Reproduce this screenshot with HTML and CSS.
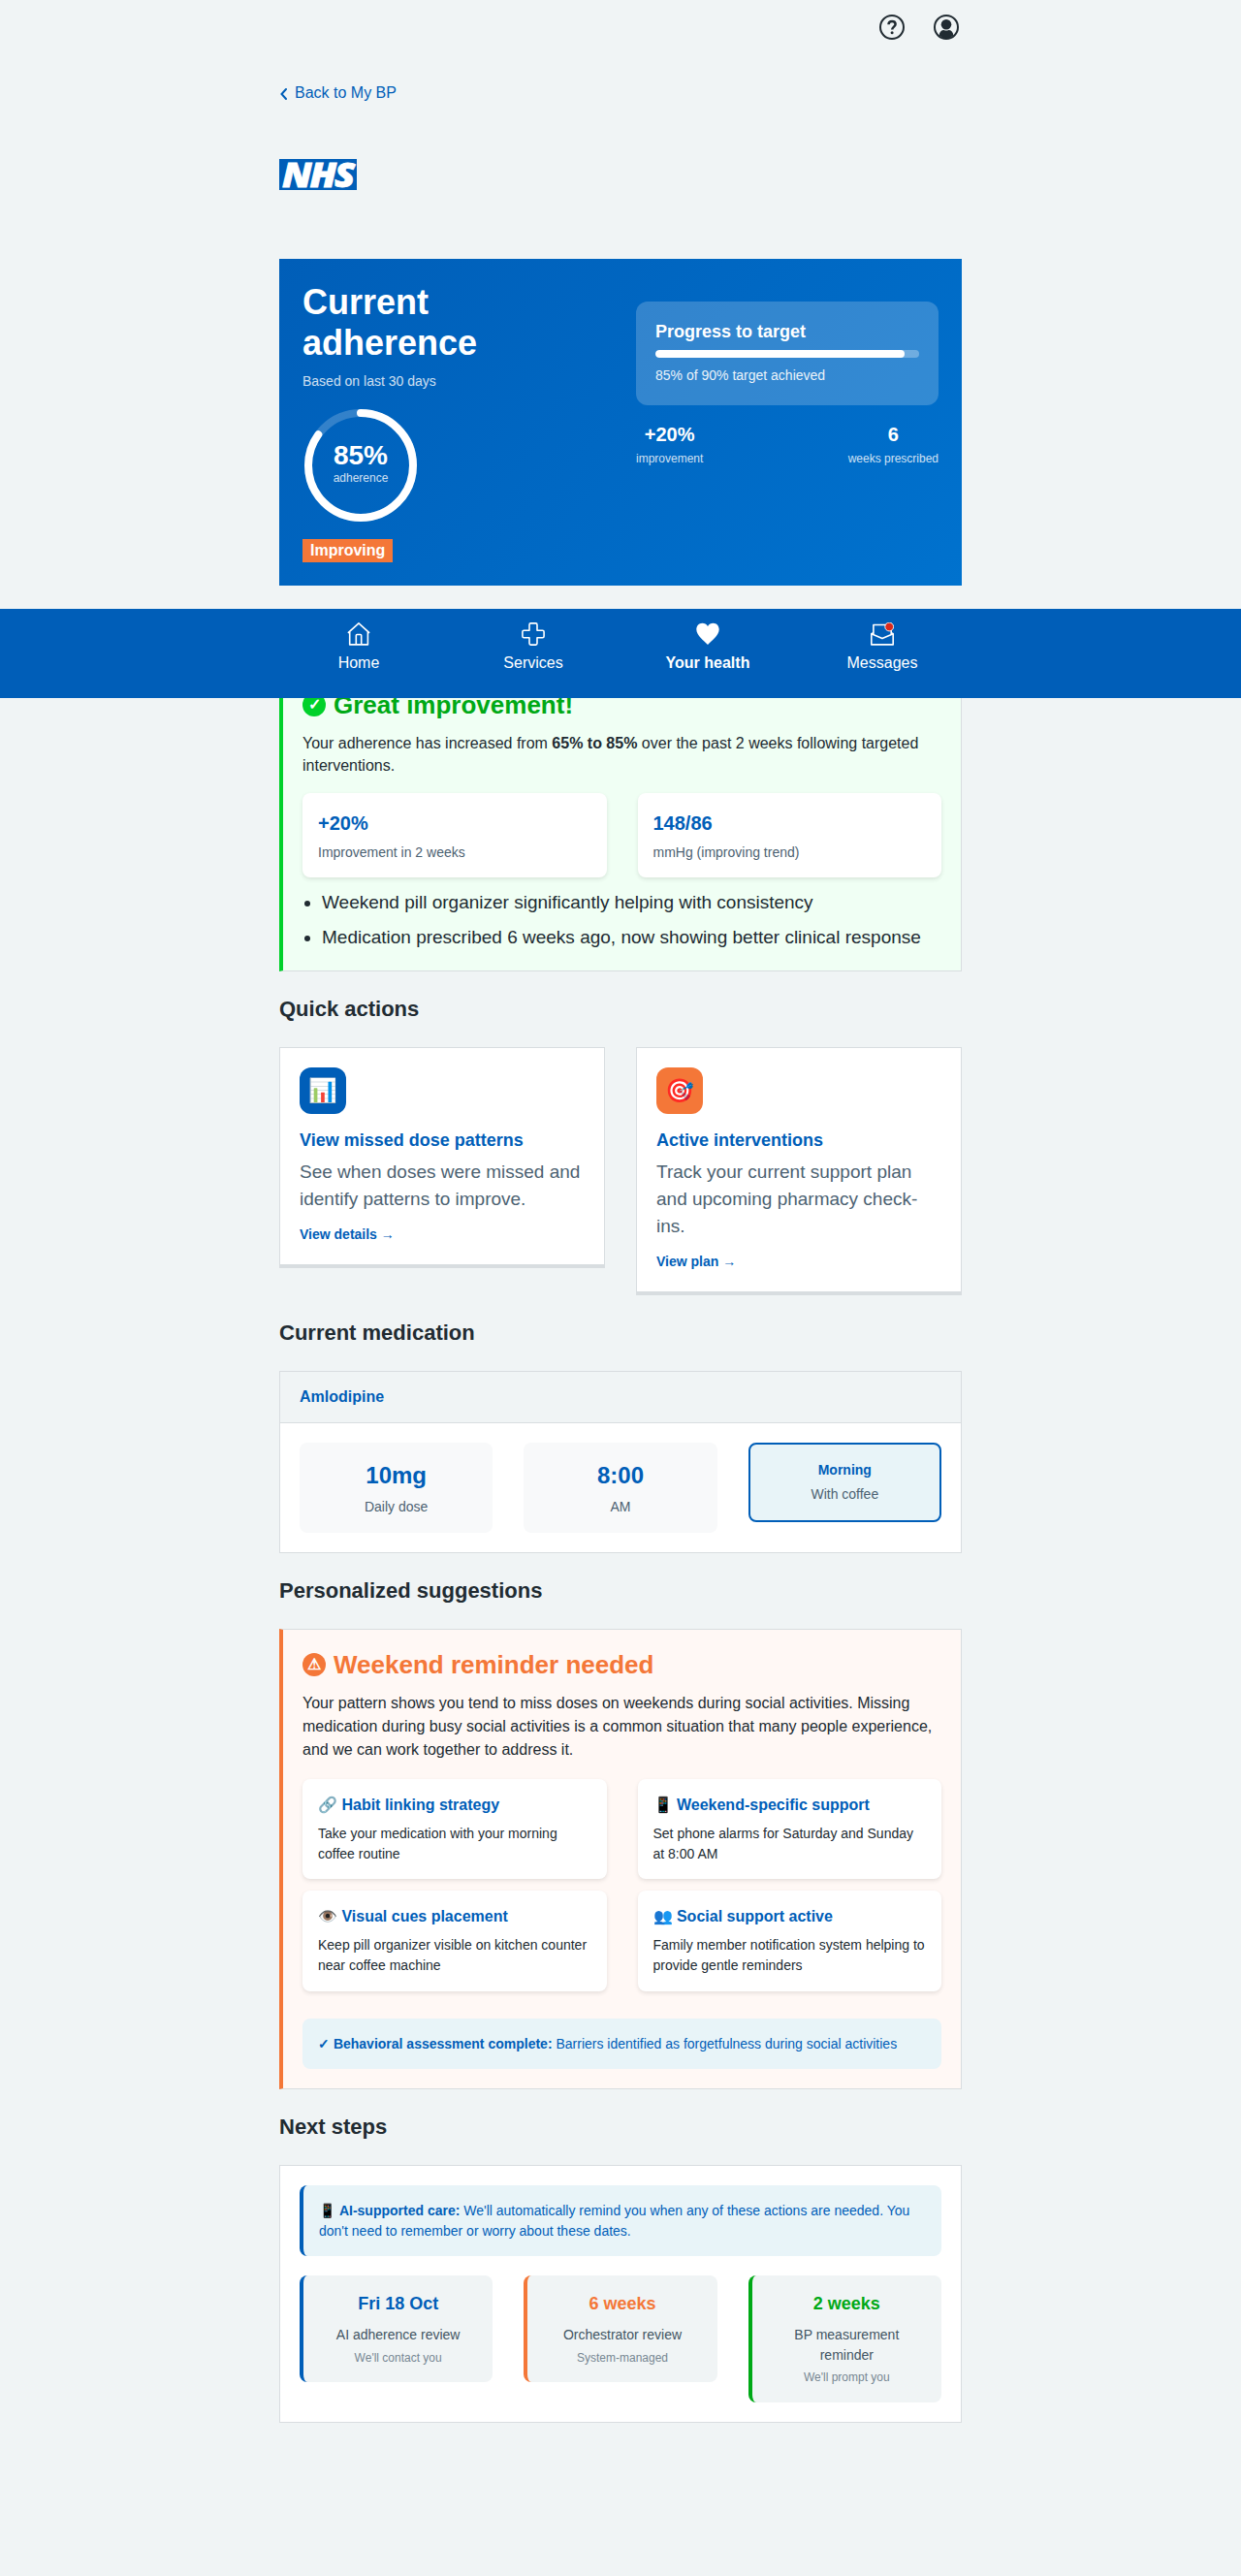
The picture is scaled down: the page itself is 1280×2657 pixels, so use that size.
FILE: index.html
```html
<!DOCTYPE html>
<html lang="en">
<head>
<meta charset="utf-8">
<title>Current adherence</title>
<link rel="stylesheet" href="styles.css">
</head>
<body>
<header class="container header">
  <div class="header-icons">
    <svg class="header-icon" viewBox="0 0 26 26" role="img" aria-label="Help">
      <circle cx="13" cy="13" r="12" fill="none" stroke="#212b32" stroke-width="2"/>
      <path d="M9.500 10.300c0-2.200 1.500-3.400 3.600-3.400s3.500 1.200 3.500 3.100c0 2.600-3.400 2.700-3.400 5.600" fill="none" stroke="#212b32" stroke-width="2.500"/>
      <circle cx="13.100" cy="18.800" r="1.500" fill="#212b32"/>
    </svg>
    <svg class="header-icon" viewBox="0 0 26 26" role="img" aria-label="Account">
      <circle cx="13" cy="13" r="12" fill="none" stroke="#212b32" stroke-width="2"/>
      <circle cx="13" cy="10.200" r="5.300" fill="#212b32"/>
      <path d="M5.600 21.600c.3-3.600 2.400-5.600 5-5.600 1.600.7 3.200.7 4.800 0 2.600 0 4.700 2 5 5.600A12 12 0 0 1 13 25a12 12 0 0 1-7.400-3.400z" fill="#212b32"/>
    </svg>
  </div>
  <a class="back-link" href="#">
    <svg class="chevron" viewBox="0 0 7 12"><path d="M6 1L1.500 6 6 11" fill="none" stroke="#005eb8" stroke-width="2" stroke-linecap="round"/></svg>
    Back to My BP
  </a>
  <svg class="logo" viewBox="0 0 80 32" role="img" aria-label="NHS">
    <rect width="80" height="32" fill="#005eb8"/>
    <text class="logo-text" x="3" y="29" textLength="73" lengthAdjust="spacingAndGlyphs">NHS</text>
  </svg>
</header>

<main class="container">
  <section class="hero">
    <div class="hero-main">
      <h1 class="hero-title">Current adherence</h1>
      <p class="hero-sub">Based on last 30 days</p>
      <div class="ring">
        <svg class="ring-svg" viewBox="0 0 120 120">
          <circle cx="60" cy="60" r="54" fill="none" stroke="#fff" stroke-opacity=".2" stroke-width="8"/>
          <circle cx="60" cy="60" r="54" fill="none" stroke="#fff" stroke-width="8" stroke-linecap="round" pathLength="100" stroke-dasharray="85 100" transform="rotate(-90 60 60)"/>
        </svg>
        <div class="ring-label"><span class="ring-value">85%</span><span class="ring-caption">adherence</span></div>
      </div>
      <strong class="tag">Improving</strong>
    </div>
    <div class="hero-side">
      <div class="target">
        <h3 class="target-title">Progress to target</h3>
        <div class="bar"><div class="bar-fill" style="width:94.4%"></div></div>
        <p class="target-note">85% of 90% target achieved</p>
      </div>
      <div class="hero-stats">
        <div class="hero-stat"><span class="hero-num">+20%</span><span class="hero-cap">improvement</span></div>
        <div class="hero-stat"><span class="hero-num">6</span><span class="hero-cap">weeks prescribed</span></div>
      </div>
    </div>
  </section>

  <section class="callout callout-green">
    <h2 class="callout-title"><span class="badge">✓</span>Great improvement!</h2>
    <p class="callout-text">Your adherence has increased from <strong>65% to 85%</strong> over the past 2 weeks following targeted interventions.</p>
    <div class="pair">
      <div class="mini"><div class="mini-num">+20%</div><div class="mini-cap">Improvement in 2 weeks</div></div>
      <div class="mini"><div class="mini-num">148/86</div><div class="mini-cap">mmHg (improving trend)</div></div>
    </div>
    <ul class="bullets">
      <li>Weekend pill organizer significantly helping with consistency</li>
      <li>Medication prescribed 6 weeks ago, now showing better clinical response</li>
    </ul>
  </section>

  <h2 class="section-title">Quick actions</h2>
  <div class="actions">
    <article class="action">
      <div class="action-icon">📊</div>
      <h3 class="action-title">View missed dose patterns</h3>
      <p class="action-text">See when doses were missed and identify patterns to improve.</p>
      <a class="action-link" href="#">View details →</a>
    </article>
    <article class="action">
      <div class="action-icon action-icon-orange">🎯</div>
      <h3 class="action-title">Active interventions</h3>
      <p class="action-text">Track your current support plan and upcoming pharmacy check-ins.</p>
      <a class="action-link" href="#">View plan →</a>
    </article>
  </div>

  <h2 class="section-title">Current medication</h2>
  <section class="panel">
    <h3 class="panel-head">Amlodipine</h3>
    <div class="panel-body trio">
      <div class="dose"><div class="dose-num">10mg</div><div class="dose-cap">Daily dose</div></div>
      <div class="dose"><div class="dose-num">8:00</div><div class="dose-cap">AM</div></div>
      <div class="dose dose-active"><div class="dose-when">Morning</div><div class="dose-cap">With coffee</div></div>
    </div>
  </section>

  <h2 class="section-title">Personalized suggestions</h2>
  <section class="callout callout-orange">
    <h2 class="callout-title"><span class="badge">⚠</span>Weekend reminder needed</h2>
    <p class="callout-text">Your pattern shows you tend to miss doses on weekends during social activities. Missing medication during busy social activities is a common situation that many people experience, and we can work together to address it.</p>
    <div class="pair">
      <div class="mini"><h4 class="mini-title">🔗 Habit linking strategy</h4><p class="mini-text">Take your medication with your morning coffee routine</p></div>
      <div class="mini"><h4 class="mini-title">📱 Weekend-specific support</h4><p class="mini-text">Set phone alarms for Saturday and Sunday at 8:00 AM</p></div>
      <div class="mini"><h4 class="mini-title">👁️ Visual cues placement</h4><p class="mini-text">Keep pill organizer visible on kitchen counter near coffee machine</p></div>
      <div class="mini"><h4 class="mini-title">👥 Social support active</h4><p class="mini-text">Family member notification system helping to provide gentle reminders</p></div>
    </div>
    <p class="note note-assessment"><strong>✓ Behavioral assessment complete:</strong> Barriers identified as forgetfulness during social activities</p>
  </section>

  <h2 class="section-title">Next steps</h2>
  <section class="panel">
    <div class="panel-body">
      <p class="note note-ai">📱 <strong>AI-supported care:</strong> We'll automatically remind you when any of these actions are needed. You don't need to remember or worry about these dates.</p>
      <div class="trio">
        <div class="step step-blue"><div class="step-date">Fri 18 Oct</div><div class="step-name">AI adherence review</div><div class="step-by">We'll contact you</div></div>
        <div class="step step-orange"><div class="step-date">6 weeks</div><div class="step-name">Orchestrator review</div><div class="step-by">System-managed</div></div>
        <div class="step step-green"><div class="step-date">2 weeks</div><div class="step-name">BP measurement reminder</div><div class="step-by">We'll prompt you</div></div>
      </div>
    </div>
  </section>
</main>

<nav class="nav">
  <div class="nav-inner">
    <a class="nav-item" href="#">
      <svg class="nav-icon" viewBox="0 0 24 24"><path d="M.9 10.800L12 .9l11.100 9.900M2.700 9.500v13.400h18.700V9.500M9.300 22.900v-9.500q0-.9.900-.9h3.600q.9 0 .9.900v9.500"/></svg>
      Home
    </a>
    <a class="nav-item" href="#">
      <svg class="nav-icon" viewBox="0 0 24 24"><path d="M9.500.9h5q1.500 0 1.500 1.500v5.900h5.600q1.500 0 1.500 1.500v4.500q0 1.500-1.500 1.500H16v5.800q0 1.500-1.500 1.500h-5Q8 23.100 8 21.600v-5.800H2.400q-1.500 0-1.500-1.500V9.800q0-1.500 1.500-1.500H8V2.400Q8 .9 9.500.9z"/></svg>
      Services
    </a>
    <a class="nav-item nav-item-active" href="#">
      <svg class="nav-icon" viewBox="0 0 24 24"><path class="solid" d="M12 23C8.500 19.200.3 13.600.3 7.300.3 3.600 3 .8 6.300.8c2.400 0 4.500 1.200 5.700 3.100C13.200 2 15.300.8 17.700.8c3.300 0 6 2.800 6 6.500C23.700 13.600 15.500 19.200 12 23z"/></svg>
      Your health
    </a>
    <a class="nav-item" href="#">
      <svg class="nav-icon" viewBox="0 0 24 24"><path d="M2.900 12V2.500h15M21.200 8v4M2.900 10.600L.8 11.800v11.100h22.400V11.800l-2-1.200M.8 11.800L12 16.600l11.200-4.800"/><circle class="dot" cx="19.200" cy="4.500" r="4.400"/></svg>
      Messages
    </a>
  </div>
</nav>
</body>
</html>
```
FILE: styles.css
```css
* { box-sizing: border-box; }

body {
  margin: 0;
  min-height: 2657px;
  position: relative;
  background: #f0f4f5;
  color: #212b32;
  font-family: "Liberation Sans", Arial, sans-serif;
  font-size: 19px;
  line-height: 1.47368;
}

h1, h2, h3, h4, p, ul { margin: 0; }
a { text-decoration: none; }

.container { width: 704px; margin: 0 auto; }

/* Header */
.header { height: 267px; padding-top: 15px; }
.header-icons {
  display: flex;
  justify-content: flex-end;
  gap: 30px;
  padding-right: 3px;
}
.header-icon { width: 26px; height: 26px; display: block; }
.back-link {
  display: flex;
  align-items: center;
  gap: 8px;
  width: max-content;
  margin-top: 43px;
  padding-left: 1px;
  color: #005eb8;
  font-size: 16px;
  line-height: 24px;
}
.chevron { width: 7px; height: 12px; margin-top: 1px; }
.logo { display: block; width: 80px; height: 32px; margin-top: 56px; }
.logo-text {
  fill: #fff;
  stroke: #fff;
  stroke-width: .8px;
  font-family: "Open Sans", "Noto Sans", sans-serif;
  font-size: 36px;
  font-weight: 800;
  font-style: italic;
  letter-spacing: -2px;
}

/* Hero */
.hero {
  display: grid;
  grid-template-columns: 312px 312px;
  gap: 32px;
  height: 337px;
  padding: 24px;
  background: linear-gradient(135deg, #005eb8 0%, #0072ce 100%);
  color: #fff;
}
.hero-title { font-size: 36px; line-height: 42px; }
.hero-sub { margin-top: 8px; font-size: 14px; opacity: .8; }
.ring { display: grid; width: 120px; height: 120px; margin: 16px 0; }
.ring-svg, .ring-label { grid-area: 1 / 1; }
.ring-label {
  display: flex;
  flex-direction: column;
  align-items: center;
  justify-content: center;
}
.ring-value { font-size: 28px; font-weight: 700; line-height: 28px; }
.ring-caption { margin-top: 1px; font-size: 12px; line-height: 17.68px; opacity: .8; }
.tag {
  display: block;
  width: max-content;
  padding: 0 8px;
  background: #f47738;
  font-size: 16px;
  line-height: 24px;
}
.hero-side { padding-top: 20px; }
.target { padding: 20px; border-radius: 12px; background: rgba(255, 255, 255, .2); }
.target-title { font-size: 18px; line-height: 22px; }
.bar {
  height: 8px;
  margin: 8px 0;
  border-radius: 4px;
  background: rgba(255, 255, 255, .3);
  overflow: hidden;
}
.bar-fill { height: 100%; border-radius: 4px; background: #fff; }
.target-note { font-size: 14px; opacity: .9; }
.hero-stats { display: flex; justify-content: space-between; margin-top: 16.5px; }
.hero-stat { display: flex; flex-direction: column; align-items: center; }
.hero-num { font-size: 20px; font-weight: 700; }
.hero-cap { margin-top: 1px; font-size: 12px; opacity: .8; }

/* Callouts */
.callout {
  padding: 20px;
  border: 1px solid #d8dde0;
  border-left-width: 4px;
}
.callout-green { margin-top: 86px; background: #f0fff4; border-left-color: #00d12a; }
.callout-orange { background: #fff8f5; border-left-color: #f47738; }
.callout-title {
  display: flex;
  align-items: center;
  gap: 8px;
  font-size: 26px;
  line-height: 32px;
}
.callout-green .callout-title { color: #00a916; }
.callout-orange .callout-title { color: #f47738; }
.badge {
  width: 24px;
  height: 24px;
  border-radius: 50%;
  color: #fff;
  font-size: 16px;
  line-height: 23px;
  text-align: center;
}
.callout-green .badge { background: #00d12a; }
.callout-orange .badge { background: #f47738; }
.callout-text { margin-top: 12px; font-size: 16px; }
.callout-green .callout-text { margin: 11.5px 0 16.5px; }
.pair { display: grid; grid-template-columns: 1fr 1fr; gap: 12px 32px; }
.callout-orange .pair { margin-top: 19px; }
.mini {
  padding: 16px;
  border-radius: 8px;
  background: #fff;
  box-shadow: 0 2px 4px rgba(0, 0, 0, .1);
}
.mini-num { margin: 1px 0 4px; color: #005eb8; font-size: 20px; font-weight: 700; }
.mini-cap { color: #4c6272; font-size: 14px; }
.mini-title { margin-bottom: 9px; color: #005eb8; font-size: 16px; line-height: 21px; }
.mini-text { font-size: 14px; }
.bullets { margin-top: 12px; padding-left: 20px; }
.bullets li + li { margin-top: 8px; }
.note {
  padding: 16px;
  border-radius: 8px;
  background: #e8f4f8;
  color: #005eb8;
  font-size: 14px;
}
.note-assessment { margin-top: 28px; }
.note-ai { margin-bottom: 20px; border-left: 4px solid #005eb8; }

.section-title { margin: 25px 0; font-size: 22px; line-height: 28px; }

/* Quick actions */
.actions { display: grid; grid-template-columns: 1fr 1fr; align-items: start; gap: 32px; }
.action {
  padding: 20px;
  border: 1px solid #d8dde0;
  border-bottom-width: 4px;
  background: #fff;
}
.action-icon {
  width: 48px;
  height: 48px;
  border-radius: 12px;
  background: #005eb8;
  font-size: 24px;
  line-height: 48px;
  text-align: center;
}
.action-icon-orange { background: #f47738; }
.action-title { margin: 16px 0 8px; color: #005eb8; font-size: 18px; line-height: 22px; }
.action-text { color: #4c6272; }
.action-link {
  display: block;
  margin-top: 12px;
  color: #005eb8;
  font-size: 14px;
  font-weight: 700;
}

/* Panels */
.panel { border: 1px solid #d8dde0; background: #fff; }
.panel-head {
  padding: 14px 20px 15px;
  border-bottom: 1px solid #d8dde0;
  background: #f0f4f5;
  color: #005eb8;
  font-size: 16px;
}
.panel-body { padding: 20px; }
.trio { display: grid; grid-template-columns: repeat(3, 1fr); align-items: start; gap: 32px; }
.dose {
  padding: 16px 16px 17px;
  border-radius: 8px;
  background: #f8f9fa;
  text-align: center;
}
.dose-active { padding-bottom: 16px; border: 2px solid #005eb8; background: #e8f4f8; }
.dose-num { margin-bottom: 4px; color: #005eb8; font-size: 24px; font-weight: 700; }
.dose-when { margin-bottom: 4px; color: #005eb8; font-size: 14px; font-weight: 700; }
.dose-cap { color: #4c6272; font-size: 14px; }

/* Next steps */
.step {
  padding: 16px;
  border-left: 4px solid;
  border-radius: 8px;
  background: #f0f4f5;
  text-align: center;
}
.step-blue { color: #005eb8; }
.step-orange { color: #f47738; }
.step-green { color: #00a916; }
.step-date { margin-bottom: 8px; font-size: 18px; font-weight: 700; }
.step-name { margin-bottom: 5px; color: #425563; font-size: 14px; }
.step-by { color: #768692; font-size: 12px; }

/* Navigation pinned to the bottom of the first screen, over the content */
.nav {
  position: absolute;
  top: 628px;
  left: 0;
  width: 100%;
  height: 92px;
  background: #005eb8;
}
.nav-inner { display: grid; grid-template-columns: repeat(4, 1fr); width: 720px; margin: 0 auto; }
.nav-item {
  display: flex;
  flex-direction: column;
  align-items: center;
  gap: 6px;
  padding-top: 14px;
  color: #fff;
  font-size: 16px;
  line-height: 23px;
}
.nav-item-active { font-weight: 700; }
.nav-icon {
  width: 24px;
  height: 24px;
  fill: none;
  stroke: #fff;
  stroke-width: 1.6;
  stroke-linejoin: round;
}
.nav-icon .solid { fill: #fff; stroke: none; }
.nav-icon .dot { fill: #da291c; stroke-width: .9; }
```
